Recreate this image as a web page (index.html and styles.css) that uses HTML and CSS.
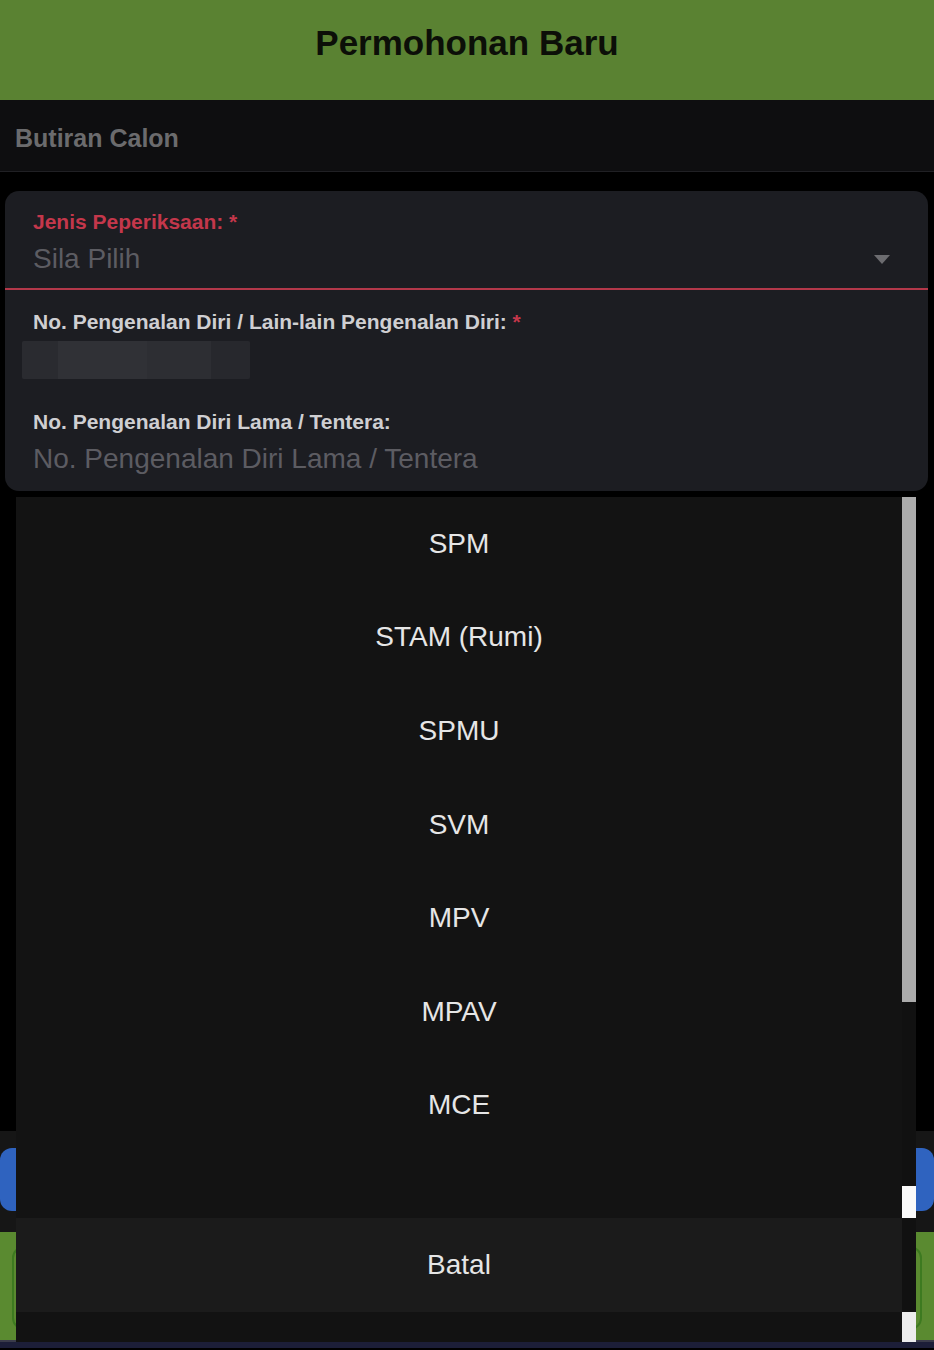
FILE: index.html
```html
<!DOCTYPE html>
<html>
<head>
    <meta charset="utf-8">
    <title>Permohonan Baru</title>
    <link rel="stylesheet" href="styles.css">
</head>
<body>
    <header class="topbar">
        <h1>Permohonan Baru</h1>
    </header>

    <div class="section-bar">Butiran Calon</div>

    <main class="content">
        <div class="card">
            <div class="field select-field">
                <label class="label label-error">Jenis Peperiksaan: <span class="req">*</span></label>
                <div class="select">
                    <span class="placeholder">Sila Pilih</span>
                    <span class="caret"></span>
                </div>
            </div>

            <div class="field">
                <label class="label">No. Pengenalan Diri / Lain-lain Pengenalan Diri: <span class="req">*</span></label>
                <div class="redacted"></div>
            </div>

            <div class="field last">
                <label class="label">No. Pengenalan Diri Lama / Tentera:</label>
                <div class="placeholder">No. Pengenalan Diri Lama / Tentera</div>
            </div>
        </div>

        <div class="footer">
            <div class="btn-blue"></div>
            <div class="green-bar"><div class="btn-green"></div></div>
        </div>
    </main>

    <div class="bottom-strip"></div>

    <!-- picker sheet lies over the form -->
    <div class="picker">
        <div class="picker-list">
            <ul class="options">
                <li>SPM</li>
                <li>STAM (Rumi)</li>
                <li>SPMU</li>
                <li>SVM</li>
                <li>MPV</li>
                <li>MPAV</li>
                <li>MCE</li>
            </ul>
            <div class="cancel">Batal</div>
            <div class="picker-foot"></div>
        </div>
        <div class="track">
            <div class="thumb"></div>
            <div class="track-mark mark-a"></div>
            <div class="track-mark mark-b"></div>
        </div>
    </div>
</body>
</html>
```

FILE: styles.css
```css
body {
    margin: 0;
    background: #000;
    font-family: "Liberation Sans", Arial, sans-serif;
    position: relative;
    width: 934px;
    height: 1350px;
    overflow: hidden;
}

.topbar {
    height: 100px;
    background: #5a8232;
    display: flex;
    align-items: center;
    justify-content: center;
}
.topbar h1 {
    margin: 0 0 14px 0;
    font-size: 35px;
    font-weight: bold;
    color: #0c0f08;
}

.section-bar {
    height: 72px;
    box-sizing: border-box;
    background: #0e0e10;
    border-bottom: 1px solid #202024;
    display: flex;
    align-items: center;
    padding: 6px 0 0 15px;
    font-size: 25px;
    font-weight: bold;
    color: #6b6b6d;
}

.content {
    padding: 19px 6px 0 5px;
}

.card {
    background: #1c1d22;
    border-radius: 14px;
    padding-top: 18px;
    padding-bottom: 14px;
}

.field {
    padding: 0 28px;
}
.label {
    display: block;
    font-size: 21px;
    line-height: 26px;
    font-weight: bold;
    color: #cfcfd2;
}
.label-error {
    color: #c4374b;
}
.req {
    color: #c4374b;
}

.select-field {
    padding: 0;
    border-bottom: 2px solid #b3384a;
}
.select-field .label {
    padding: 0 28px;
}
.select {
    display: flex;
    align-items: center;
    justify-content: space-between;
    padding: 6px 38px 11px 28px;
}
.placeholder {
    font-size: 28px;
    line-height: 36px;
    color: #5c5c62;
}
.caret {
    width: 0;
    height: 0;
    border-left: 8px solid transparent;
    border-right: 8px solid transparent;
    border-top: 9px solid #6c6c70;
}

.select-field + .field {
    padding-top: 19px;
}
.redacted {
    width: 228px;
    height: 38px;
    margin: 6px 0 0 -11px;
    background: linear-gradient(to right, #2a2b30 0, #2a2b30 16%, #303136 16%, #303136 55%, #2d2e33 55%, #2d2e33 83%, #27282d 83%);
    border-radius: 2px;
}
.field.last {
    padding-top: 30px;
}
.field.last .placeholder {
    margin-top: 6px;
}

.footer {
    margin: 640px -6px 0 -5px;
    background: #161616;
    padding-top: 17px;
}
.btn-blue {
    height: 63px;
    background: #2f63bf;
    border-radius: 12px;
}
.green-bar {
    margin-top: 21px;
    height: 108px;
    box-sizing: border-box;
    background: #5a8a30;
    padding: 14px 12px 0 12px;
}
.btn-green {
    height: 80px;
    border: 2px solid #3d7a20;
    border-radius: 12px;
}

.bottom-strip {
    height: 8px;
    background: #1c1e38;
    border-top: 2px solid #3a3b4a;
    box-sizing: border-box;
}

/* picker */
.picker {
    position: absolute;
    top: 497px;
    left: 16px;
    width: 900px;
    height: 845px;
    display: flex;
    background: #131313;
}
.picker-list {
    flex: 1;
    display: flex;
    flex-direction: column;
}
.options {
    list-style: none;
    margin: 0;
    padding: 0;
    height: 721px;
}
.options li {
    height: 93.6px;
    display: flex;
    align-items: center;
    justify-content: center;
    font-size: 28px;
    color: #e6e6e6;
}
.cancel {
    height: 94px;
    background: #1b1b1b;
    display: flex;
    align-items: center;
    justify-content: center;
    font-size: 28px;
    color: #e6e6e6;
}
.picker-foot {
    flex: 1;
    background: #121212;
}
.track {
    width: 14px;
    position: relative;
    background: #111;
}
.thumb {
    height: 505px;
    background: #ababab;
}
.track-mark {
    position: absolute;
    left: 0;
    width: 14px;
    background: #fafafa;
}
.mark-a {
    top: 689px;
    height: 32px;
}
.mark-b {
    top: 815px;
    height: 30px;
    background: #ececec;
}
```
